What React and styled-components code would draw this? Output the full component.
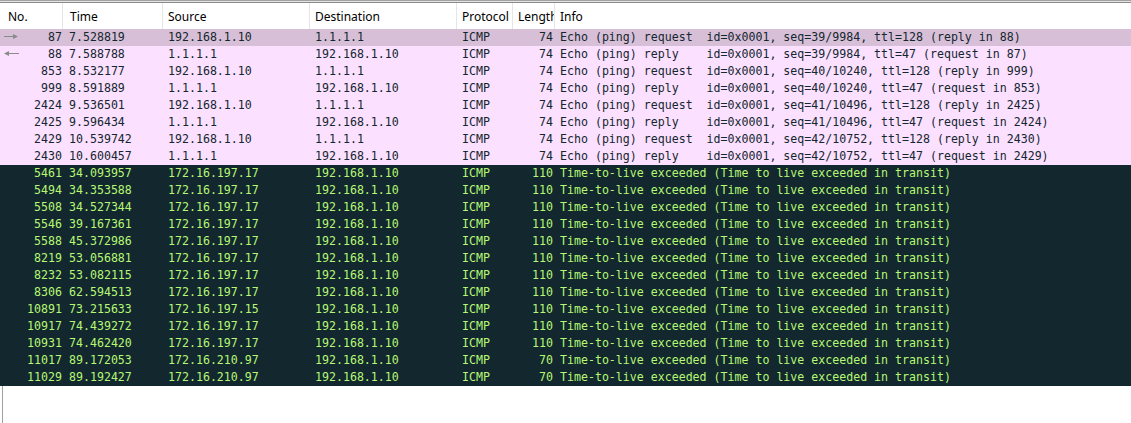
import styled, { createGlobalStyle } from "styled-components"

const Global = createGlobalStyle`
    html, body {
        margin: 0;
        padding: 0;
        background: #ffffff;
        overflow: hidden;
    }
`

const COLS = "63px 100px 147px 147px 56px 42px 1fr"

const Janela = styled.div`
    width: 1131px;
    height: 423px;
    display: flex;
    flex-direction: column;
    border-top: 1px solid #a3a3a3;
    box-sizing: border-box;
`

const LinhaDupla = styled.div`
    height: 2px;
    border-top: 1px solid #e3e3e3;
    border-bottom: 1px solid #8c8c8c;
    box-sizing: border-box;
`

const Lista = styled.div`
    flex-grow: 1;
    margin-left: 2px;
    border-left: 1px solid #a0a0a0;
    display: flex;
    flex-direction: column;
`

const Cabecalho = styled.div`
    display: grid;
    grid-template-columns: ${COLS};
    height: 26px;
    margin-left: -3px;
    background: #ffffff;
    font-family: "Noto Sans", "Open Sans", sans-serif;
    font-size: 12px;
    color: #000000;
`

const Titulo = styled.div`
    display: flex;
    align-items: center;
    padding-left: ${p => p.$pad || 5}px;
    padding-top: 1px;
    border-right: 1px solid #e5e5e5;
    overflow: hidden;
    white-space: nowrap;
    &:last-child {
        border-right: none;
    }
`

const Linha = styled.div`
    display: grid;
    grid-template-columns: ${COLS};
    height: 17px;
    margin-left: -3px;
    background: ${p => p.$bg};
    color: ${p => p.$fg};
    font-family: "DejaVu Sans Mono", "Liberation Mono", monospace;
    font-size: 11.6px;
    line-height: 17px;
`

const Celula = styled.div`
    white-space: pre;
    overflow: hidden;
    padding-left: ${p => (p.$right ? 0 : p.$pad || 5)}px;
    padding-right: ${p => (p.$right ? 2 : 0)}px;
    text-align: ${p => (p.$right ? "right" : "left")};
`

const CelulaNumero = styled(Celula)`
    display: flex;
    align-items: center;
    justify-content: space-between;
    padding-left: 3px;
    padding-right: 1px;
`

const Seta = ({ dir }) => (
    <svg width="16" height="9" viewBox="0 0 16 9">
        {dir === "right" ? (
            <>
                <line x1="1" y1="4.5" x2="11" y2="4.5" stroke="#8a8a8a" strokeWidth="1" />
                <polygon points="10,2 15,4.5 10,7" fill="#8a8a8a" />
            </>
        ) : (
            <>
                <line x1="5" y1="4.5" x2="16" y2="4.5" stroke="#8a8a8a" strokeWidth="1" />
                <polygon points="6,2 1,4.5 6,7" fill="#8a8a8a" />
            </>
        )}
    </svg>
)

const ECHO = [
    ["87", "7.528819", "192.168.1.10", "1.1.1.1", "74", "Echo (ping) request  id=0x0001, seq=39/9984, ttl=128 (reply in 88)", "right"],
    ["88", "7.588788", "1.1.1.1", "192.168.1.10", "74", "Echo (ping) reply    id=0x0001, seq=39/9984, ttl=47 (request in 87)", "left"],
    ["853", "8.532177", "192.168.1.10", "1.1.1.1", "74", "Echo (ping) request  id=0x0001, seq=40/10240, ttl=128 (reply in 999)"],
    ["999", "8.591889", "1.1.1.1", "192.168.1.10", "74", "Echo (ping) reply    id=0x0001, seq=40/10240, ttl=47 (request in 853)"],
    ["2424", "9.536501", "192.168.1.10", "1.1.1.1", "74", "Echo (ping) request  id=0x0001, seq=41/10496, ttl=128 (reply in 2425)"],
    ["2425", "9.596434", "1.1.1.1", "192.168.1.10", "74", "Echo (ping) reply    id=0x0001, seq=41/10496, ttl=47 (request in 2424)"],
    ["2429", "10.539742", "192.168.1.10", "1.1.1.1", "74", "Echo (ping) request  id=0x0001, seq=42/10752, ttl=128 (reply in 2430)"],
    ["2430", "10.600457", "1.1.1.1", "192.168.1.10", "74", "Echo (ping) reply    id=0x0001, seq=42/10752, ttl=47 (request in 2429)"],
]

const TTL = "Time-to-live exceeded (Time to live exceeded in transit)"

const ERROS = [
    ["5461", "34.093957", "172.16.197.17", "110"],
    ["5494", "34.353588", "172.16.197.17", "110"],
    ["5508", "34.527344", "172.16.197.17", "110"],
    ["5546", "39.167361", "172.16.197.17", "110"],
    ["5588", "45.372986", "172.16.197.17", "110"],
    ["8219", "53.056881", "172.16.197.17", "110"],
    ["8232", "53.082115", "172.16.197.17", "110"],
    ["8306", "62.594513", "172.16.197.17", "110"],
    ["10891", "73.215633", "172.16.197.15", "110"],
    ["10917", "74.439272", "172.16.197.17", "110"],
    ["10931", "74.462420", "172.16.197.17", "110"],
    ["11017", "89.172053", "172.16.210.97", "70"],
    ["11029", "89.192427", "172.16.210.97", "70"],
]

const pacotes = [
    ...ECHO.map((p, i) => ({
        no: p[0], time: p[1], src: p[2], dst: p[3], len: p[4], info: p[5], seta: p[6],
        bg: i === 0 ? "#d8bfd8" : "#fce0ff", fg: "#12272e",
    })),
    ...ERROS.map(p => ({
        no: p[0], time: p[1], src: p[2], dst: "192.168.1.10", len: p[3], info: TTL,
        bg: "#12272e", fg: "#b7f774",
    })),
]

const App = () => {
    return (
        <>
            <Global />
            <Janela>
                <LinhaDupla />
                <Lista>
                    <Cabecalho>
                        <Titulo $pad={8}>No.</Titulo>
                        <Titulo $pad={7}>Time</Titulo>
                        <Titulo>Source</Titulo>
                        <Titulo>Destination</Titulo>
                        <Titulo>Protocol</Titulo>
                        <Titulo>Length</Titulo>
                        <Titulo>Info</Titulo>
                    </Cabecalho>
                    {pacotes.map(p => (
                        <Linha key={p.no} $bg={p.bg} $fg={p.fg}>
                            <CelulaNumero $right>
                                <span>{p.seta && <Seta dir={p.seta} />}</span>
                                <span>{p.no}</span>
                            </CelulaNumero>
                            <Celula $pad={6}>{p.time}</Celula>
                            <Celula>{p.src}</Celula>
                            <Celula>{p.dst}</Celula>
                            <Celula>ICMP</Celula>
                            <Celula $right>{p.len}</Celula>
                            <Celula>{p.info}</Celula>
                        </Linha>
                    ))}
                </Lista>
            </Janela>
        </>
    )
}

export default App
